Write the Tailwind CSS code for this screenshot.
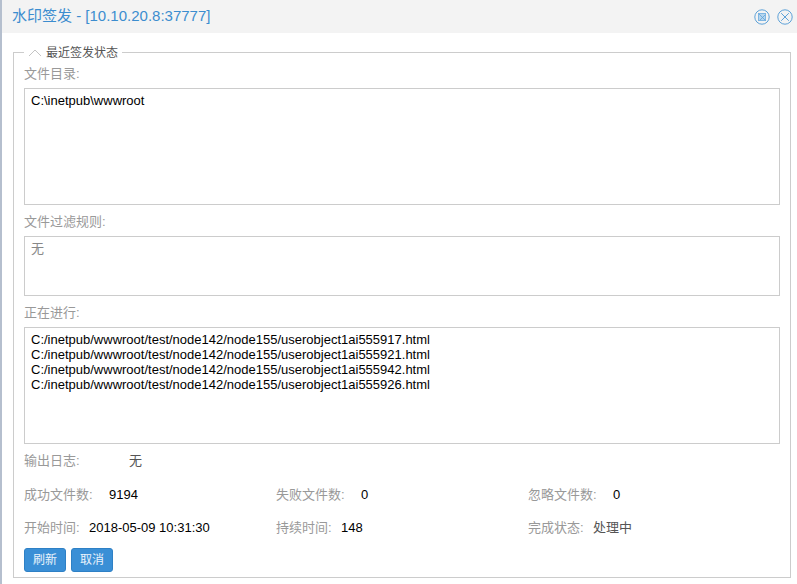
<!DOCTYPE html>
<html><head><meta charset="utf-8">
<script src="https://cdn.jsdelivr.net/npm/@tailwindcss/browser@4"></script>
</head>
<body class="w-[797px] h-[584px] overflow-hidden bg-white font-['Liberation_Sans','Noto_Sans_CJK_SC',sans-serif] text-[13px] text-black">
<div class="h-[584px] border-l-2 border-[#b5bfce] flex flex-col">
  <div class="h-[33px] shrink-0 bg-[#f3f3f3] flex items-center justify-between pl-[10px] pr-[4px]">
    <div class="text-[15px] text-[#3c8dcf]">水印签发 - [10.10.20.8:37777]</div>
    <div class="flex gap-[7px]">
      <svg width="16" height="16" viewBox="0 0 16 16" fill="none" stroke="#5ea2d8"><circle cx="8" cy="8" r="7.2"/><rect x="4.5" y="4.5" width="7" height="7" fill="#b5d5ee" stroke="#7fb6e2"/><path d="M4.5 4.5l7 7M6 11l5-5" stroke="#5ea2d8" stroke-width="0.8"/></svg>
      <svg width="16" height="16" viewBox="0 0 16 16" fill="none" stroke="#5ea2d8"><circle cx="8" cy="8" r="7.2"/><path d="M4.2 4.2l7.6 7.6M11.8 4.2l-7.6 7.6"/></svg>
    </div>
  </div>
  <div class="relative mt-[19px] ml-[11px] w-[778px] h-[526px] border border-[#cccccc] px-[10px] pt-[11px]">
    <div class="absolute -top-[8px] left-[10px] bg-white flex items-center px-[4px] h-[16px] text-[12px] text-[#555555]">
      <svg width="14" height="8" viewBox="0 0 14 8" fill="none" stroke="#c4c4c4" class="mr-[4px]"><path d="M1 7l6-6 6 6"/></svg>
      <span>最近签发状态</span>
    </div>
    <div class="h-[24px] leading-[20px] text-[#999999]">文件目录:</div>
    <div class="h-[117px] border border-[#cccccc] px-[6px] pt-[4px] leading-[15px]">C:\inetpub\wwwroot</div>
    <div class="h-[31px] pt-[7px] leading-[20px] text-[#999999]">文件过滤规则:</div>
    <div class="h-[60px] border border-[#cccccc] px-[6px] pt-[4px] leading-[15px] text-[#888888]">无</div>
    <div class="h-[31px] pt-[7px] leading-[20px] text-[#999999]">正在进行:</div>
    <div class="h-[117px] border border-[#cccccc] px-[6px] pt-[4px] leading-[15px]">
      <div>C:/inetpub/wwwroot/test/node142/node155/userobject1ai555917.html</div>
      <div>C:/inetpub/wwwroot/test/node142/node155/userobject1ai555921.html</div>
      <div>C:/inetpub/wwwroot/test/node142/node155/userobject1ai555942.html</div>
      <div>C:/inetpub/wwwroot/test/node142/node155/userobject1ai555926.html</div>
    </div>
    <div class="flex h-[34px] items-center"><span class="w-[105px] text-[#999999]">输出日志:</span><span class="text-[#555555]">无</span></div>
    <div class="grid grid-cols-3 w-[756px] h-[33px] items-center">
      <div class="flex"><span class="w-[85px] text-[#999999]">成功文件数:</span><span>9194</span></div>
      <div class="flex"><span class="w-[85px] text-[#999999]">失败文件数:</span><span>0</span></div>
      <div class="flex"><span class="w-[85px] text-[#999999]">忽略文件数:</span><span>0</span></div>
    </div>
    <div class="grid grid-cols-3 w-[756px] h-[33px] items-center">
      <div class="flex"><span class="w-[65px] text-[#999999]">开始时间:</span><span>2018-05-09 10:31:30</span></div>
      <div class="flex"><span class="w-[65px] text-[#999999]">持续时间:</span><span>148</span></div>
      <div class="flex"><span class="w-[65px] text-[#999999]">完成状态:</span><span class="text-[#555555]">处理中</span></div>
    </div>
    <div class="flex gap-[5px] mt-[4px]">
      <button class="w-[42px] h-[24px] rounded-[3px] bg-[#3a8fd6] border border-[#2e80c5] text-[12px] text-white/90">刷新</button>
      <button class="w-[42px] h-[24px] rounded-[3px] bg-[#3a8fd6] border border-[#2e80c5] text-[12px] text-white/90">取消</button>
    </div>
  </div>
</div>
</body></html>
